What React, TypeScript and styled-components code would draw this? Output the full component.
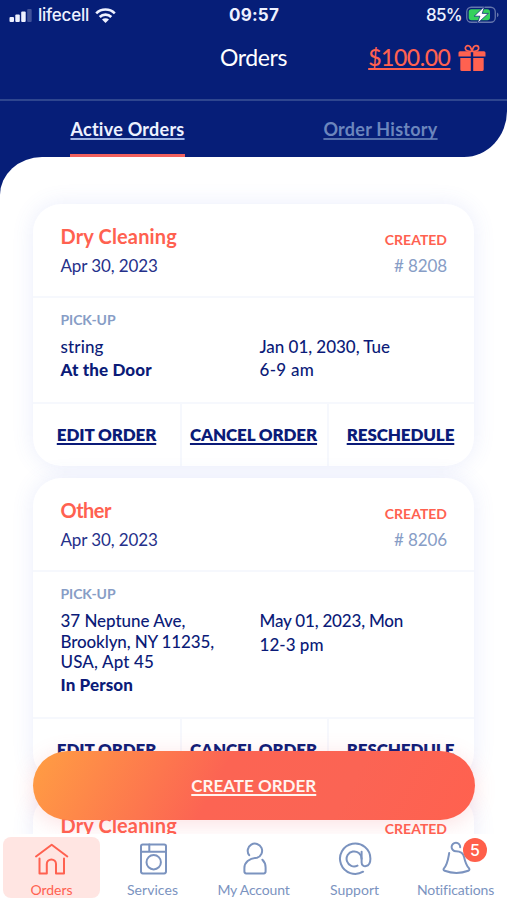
import React from 'react';
import styled, { createGlobalStyle } from 'styled-components';

const navy = '#061e78';
const ink = '#0b1b78';
const coral = '#ff6150';
const muted = '#879dc6';

const GlobalStyle = createGlobalStyle`
  *, *::before, *::after { box-sizing: border-box; }
  body { margin: 0; background: #fff; font-family: Lato, sans-serif; }
  svg { display: block; flex: none; }
`;

const Screen = styled.div`
  position: relative;
  display: flex;
  flex-direction: column;
  width: 507px;
  height: 900px;
  overflow: hidden;
  background: #fff;
`;

const Header = styled.header`
  flex: none;
  height: 157px;
  background: ${navy};
  border-bottom-right-radius: 43px 46px;
  color: #fff;
`;

const StatusBar = styled.div`
  display: grid;
  grid-template-columns: 1fr auto 1fr;
  align-items: center;
  height: 30px;
  padding: 0 8px 0 9px;
  font-family: Inter, sans-serif;
  font-size: 17px;
  line-height: 30px;
  color: #eef1ff;
`;

const StatusSide = styled.div<{ $end?: boolean }>`
  display: flex;
  align-items: center;
  gap: ${(p) => (p.$end ? 4 : 6)}px;
  justify-content: ${(p) => (p.$end ? 'flex-end' : 'flex-start')};
  font-weight: 500;
  letter-spacing: ${(p) => (p.$end ? -0.7 : -0.24)}px;
`;

const Clock = styled.div`
  font-weight: 700;
  letter-spacing: 0.2px;
`;

const TitleBar = styled.div`
  display: grid;
  grid-template-columns: 1fr auto 1fr;
  align-items: center;
  height: 71px;
  padding: 0 21px 14px;
  border-bottom: 2px solid #2e468f;
`;

const Title = styled.h1`
  grid-column: 2;
  margin: 0 0 1px;
  font-size: 23px;
  line-height: 28px;
  font-weight: 400;
  letter-spacing: -0.4px;
`;

const Balance = styled.div`
  display: flex;
  align-items: center;
  justify-content: flex-end;
  gap: 7.5px;
  color: ${coral};
  font-size: 23px;
  line-height: 28px;
  font-weight: 500;
`;

const Amount = styled.span`
  margin-bottom: 1px;
  letter-spacing: -0.45px;
  text-decoration: underline;
  text-decoration-thickness: 2px;
  text-underline-offset: 2px;
  text-decoration-skip-ink: none;
`;

const Tabs = styled.div`
  display: grid;
  grid-template-columns: 1fr 1fr;
  justify-items: center;
  height: 56px;
  padding-left: 1px;
`;

const Tab = styled.div<{ $active?: boolean }>`
  height: 56px;
  padding-top: 16px;
  font-size: 18px;
  line-height: 24px;
  font-weight: 700;
  letter-spacing: 0.26px;
  color: ${(p) => (p.$active ? '#eef2ff' : '#6c86bd')};
  border-bottom: 3px solid ${(p) => (p.$active ? '#f0605d' : 'transparent')};
  text-decoration: underline;
  text-decoration-color: ${(p) => (p.$active ? '#9fb4e4' : '#5570ad')};
  text-decoration-thickness: 2px;
  text-underline-offset: 2px;
  text-decoration-skip-ink: none;
`;

const Body = styled.main`
  flex: 1;
  min-height: 0;
  overflow: hidden;
  background: linear-gradient(${navy}, ${navy}) 0 0 / 44px 38px no-repeat;
`;

const Sheet = styled.div`
  display: flex;
  flex-direction: column;
  gap: 12px;
  min-height: 100%;
  padding: 47px 33px 0;
  background: #fff;
  border-top-left-radius: 42px 38px;
`;

const Card = styled.article`
  flex: none;
  border-radius: 28px;
  background: #fff;
  box-shadow: 0 0 22px rgba(85, 105, 225, 0.12);
`;

const CardHead = styled.div`
  display: grid;
  grid-template-columns: 1fr auto;
  grid-template-rows: 30px 28px;
  height: 94px;
  padding: 18px 27px 0 27.5px;
  border-bottom: 2px solid #f6f8fd;
`;

const Service = styled.div<{ $tight?: boolean }>`
  font-size: 20px;
  line-height: 28px;
  font-weight: 700;
  letter-spacing: ${(p) => (p.$tight ? -0.5 : 0.15)}px;
  color: ${coral};
`;

const Status = styled.div`
  padding-top: 7px;
  font-size: 14px;
  line-height: 22px;
  font-weight: 700;
  color: ${coral};
`;

const Created = styled.div`
  font-size: 17px;
  line-height: 28px;
  letter-spacing: -0.12px;
  color: #25308a;
`;

const OrderNumber = styled.div`
  font-size: 17px;
  line-height: 28px;
  text-align: right;
  letter-spacing: -0.1px;
  color: ${muted};
`;

const CardBody = styled.div`
  display: grid;
  grid-template-columns: 199px 1fr;
  padding: 12px 0 22px 27.5px;
  color: ${ink};
  font-size: 17px;
  line-height: 20.2px;
  font-weight: 500;
`;

const Leg = styled.div`
  grid-column: 1 / -1;
  margin-bottom: 7px;
  font-size: 14px;
  line-height: 20px;
  font-weight: 700;
  letter-spacing: -0.09px;
  color: ${muted};
`;

const Line = styled.div<{ $track?: number; $bold?: boolean; $gap?: boolean }>`
  margin-top: ${(p) => (p.$gap ? 3 : 0)}px;
  font-weight: ${(p) => (p.$bold ? 900 : 500)};
  letter-spacing: ${(p) => p.$track ?? 0}px;
  white-space: nowrap;
`;

const Actions = styled.div`
  display: grid;
  grid-template-columns: repeat(3, 1fr);
  height: 64px;
  border-top: 2px solid #f6f8fd;
`;

const Action = styled.div`
  display: flex;
  align-items: center;
  justify-content: center;
  padding-bottom: 2px;
  color: ${ink};
  font-size: 17px;
  font-weight: 800;
  letter-spacing: -0.12px;
  text-decoration: underline;
  text-decoration-thickness: 2px;
  text-underline-offset: 2px;
  & + & { border-left: 2px solid #f6f8fd; padding-right: 2px; }
`;

const CreateButton = styled.button`
  position: absolute;
  left: 33px;
  top: 751px;
  width: 441.5px;
  height: 69px;
  border: 0;
  border-radius: 35px;
  background: linear-gradient(118deg, #ff9a44 3%, #fc6453 42%, #fb6454 70%, #ff614f 100%);
  box-shadow: 0 4px 22px rgba(240, 100, 110, 0.2);
  color: #fff4f0;
  font: 700 17px/24px Lato, sans-serif;
  text-decoration: underline;
  text-decoration-thickness: 2px;
  text-underline-offset: 2px;
`;

const NavBar = styled.nav`
  position: relative;
  flex: none;
  display: grid;
  grid-template-columns: repeat(5, 97px);
  gap: 4px;
  height: 66px;
  padding: 3px 0 0 3px;
  background: #fff;
`;

const NavItem = styled.div<{ $active?: boolean; $track?: number }>`
  position: relative;
  display: flex;
  flex-direction: column;
  align-items: center;
  gap: 5px;
  height: 61px;
  padding-top: 3px;
  border-radius: 8px;
  background: ${(p) => (p.$active ? '#ffe5e2' : 'transparent')};
  color: ${(p) => (p.$active ? coral : '#7b93bf')};
  font-size: 14px;
  line-height: 18px;
  letter-spacing: ${(p) => p.$track ?? 0}px;
  white-space: nowrap;
`;

const Badge = styled.span`
  position: absolute;
  left: 56px;
  top: 1px;
  width: 24px;
  height: 24px;
  border-radius: 50%;
  background: #ff5f4a;
  color: #fff;
  font: 500 16px/24px Inter, sans-serif;
  text-align: center;
`;

const SignalIcon = () => (
  <svg width="23" height="13" viewBox="0 0 23 13" fill="#eef1ff">
    <rect x="0.5" y="8" width="4.5" height="5" rx="1" />
    <rect x="6.3" y="5.5" width="4.5" height="7.5" rx="1" />
    <rect x="12.2" y="2.5" width="4.5" height="10.5" rx="1" />
    <rect x="18.2" y="0" width="4.5" height="13" rx="1" opacity=".25" />
  </svg>
);

const WifiIcon = () => (
  <svg width="21" height="15" viewBox="0 0 21 15" fill="none" stroke="#eef1ff" strokeWidth="2.6">
    <path d="M1.2 5.3a13.2 13.2 0 0 1 18.6 0" />
    <path d="M4.7 9a8.2 8.2 0 0 1 11.6 0" />
    <path d="M10.5 15 7 11.6a5 5 0 0 1 7 0Z" fill="#eef1ff" stroke="none" />
  </svg>
);

const BatteryIcon = () => (
  <svg width="33" height="18" viewBox="0 0 33 18">
    <rect x="0.75" y="1.25" width="28.5" height="15" rx="4.5" fill="none" stroke="#6475ac" strokeWidth="1.3" />
    <rect x="2.7" y="3.2" width="21.3" height="11.1" rx="2.7" fill="#35d15c" />
    <path d="M31 6.5v4.600c1-.5 1.500-1.200 1.500-2.300S32 7 31 6.500Z" fill="#6475ac" />
    <path d="M18.600 0.300 8.200 10.200h5.700L11.300 17.400 22.400 7.400h-6.200Z" fill="#fff" stroke={navy} strokeWidth="0.7" />
  </svg>
);

const GiftIcon = () => (
  <svg width="28" height="28" viewBox="0 0 28 28" fill={coral}>
    <path d="M14 7.500C10.500 7.500 7.300 6.600 7.300 4.300 7.300 2.600 8.600 1.700 9.900 1.700 12.200 1.700 13.400 4.700 14 7.500 14.600 4.700 15.800 1.700 18.100 1.700c1.300 0 2.600.9 2.600 2.600 0 2.300-3.200 3.200-6.700 3.200Z" fill="none" stroke={coral} strokeWidth="1.7" />
    <path d="M2 7.200h10.800v5.300H.5V8.700A1.500 1.500 0 0 1 2 7.200ZM15.200 7.200H26a1.500 1.500 0 0 1 1.500 1.500v3.800H15.200Z" />
    <path d="M2.300 14h10.500v13H3.800a1.500 1.500 0 0 1-1.500-1.500ZM15.200 14h10.500v11.500a1.500 1.500 0 0 1-1.500 1.500h-9Z" />
  </svg>
);

const stroke = {
  fill: 'none',
  stroke: 'currentColor',
  strokeWidth: 2,
  strokeLinecap: 'round' as const,
  strokeLinejoin: 'round' as const,
};

const HomeIcon = () => (
  <svg width="36" height="36" viewBox="0 0 36 36" {...stroke}>
    <path d="M2 16.500 17.700 4.700l15.600 11.800" />
    <path d="M5.500 18.500v15h7.300V24a4.600 4.600 0 0 1 9.200 0v9.500h8V18.500" />
  </svg>
);

const WasherIcon = () => (
  <svg width="36" height="36" viewBox="0 0 36 36" {...stroke}>
    <rect x="6" y="4.5" width="25" height="28.9" rx="1.8" />
    <path d="M6 11.700h25M14.300 4.500v7.200" />
    <circle cx="18.7" cy="22.2" r="7.2" />
  </svg>
);

const UserIcon = () => (
  <svg width="36" height="36" viewBox="0 0 36 36" {...stroke}>
    <path d="M13.200 15.200A7.200 7.200 0 1 1 21 17.700C12.800 18.200 8.400 22.500 8.400 28v3.600c0 1.100.7 1.800 1.800 1.800h17.600c1.100 0 1.800-.7 1.800-1.800V27.500c0-3.200-1-5.700-3.200-7.800" />
  </svg>
);

const AtIcon = () => (
  <svg width="36" height="36" viewBox="0 0 36 36" {...stroke}>
    <path d="M20.500 25.600A7.500 7.500 0 1 1 24.600 18.700V22.500c0 5.300 8.800 5.500 8.800-3.800a15.200 15.200 0 1 0-7.300 13" />
    <path d="M24.600 18.700V11.800" />
  </svg>
);

const BellIcon = () => (
  <svg width="36" height="36" viewBox="0 0 36 36" {...stroke}>
    <path d="M22.200 7.200A4.300 4.300 0 1 0 18 11.300c4.800 0 7.300 1.900 8.100 5.800.9 4.200 1.900 7.900 4.800 11.100.9 1.100.5 2.200-.6 2.600-7.600 2.700-16.200 2.700-23.600 0-1.300-.5-1.500-1.600-.6-2.600 3.600-4.300 4-9.200 5.100-15.200" />
  </svg>
);

type TextLine = { text: string; track?: number };
type Order = {
  service: string;
  tight?: boolean;
  number: string;
  address: TextLine[];
  handover: string;
  day: TextLine;
  slot: TextLine;
};

const orders: Order[] = [
  {
    service: 'Dry Cleaning',
    number: '# 8208',
    address: [{ text: 'string', track: 0.12 }],
    handover: 'At the Door',
    day: { text: 'Jan 01, 2030, Tue', track: -0.03 },
    slot: { text: '6-9 am', track: 0.27 },
  },
  {
    service: 'Other',
    tight: true,
    number: '# 8206',
    address: [
      { text: '37 Neptune Ave,', track: -0.04 },
      { text: 'Brooklyn, NY 11235,', track: -0.13 },
      { text: 'USA, Apt 45', track: 0.14 },
    ],
    handover: 'In Person',
    day: { text: 'May 01, 2023, Mon', track: -0.19 },
    slot: { text: '12-3 pm', track: 0.03 },
  },
  {
    service: 'Dry Cleaning',
    number: '# 8205',
    address: [{ text: 'string', track: 0.12 }],
    handover: 'At the Door',
    day: { text: 'May 01, 2023, Mon', track: -0.19 },
    slot: { text: '12-3 pm', track: 0.03 },
  },
];

const OrderCard = ({ order }: { order: Order }) => (
  <Card>
    <CardHead>
      <Service $tight={order.tight}>{order.service}</Service>
      <Status>CREATED</Status>
      <Created>Apr 30, 2023</Created>
      <OrderNumber>{order.number}</OrderNumber>
    </CardHead>
    <CardBody>
      <Leg>PICK-UP</Leg>
      <div>
        {order.address.map((line) => (
          <Line key={line.text} $track={line.track}>{line.text}</Line>
        ))}
        <Line $bold $gap $track={0.12}>{order.handover}</Line>
      </div>
      <div>
        <Line $track={order.day.track}>{order.day.text}</Line>
        <Line $gap $track={order.slot.track}>{order.slot.text}</Line>
      </div>
    </CardBody>
    <Actions>
      <Action>EDIT ORDER</Action>
      <Action>CANCEL ORDER</Action>
      <Action>RESCHEDULE</Action>
    </Actions>
  </Card>
);

export default function App() {
  return (
    <>
      <GlobalStyle />
      <Screen>
        <Header>
          <StatusBar>
            <StatusSide><SignalIcon />lifecell<WifiIcon /></StatusSide>
            <Clock>09:57</Clock>
            <StatusSide $end>85%<BatteryIcon /></StatusSide>
          </StatusBar>
          <TitleBar>
            <Title>Orders</Title>
            <Balance><Amount>$100.00</Amount><GiftIcon /></Balance>
          </TitleBar>
          <Tabs>
            <Tab $active>Active Orders</Tab>
            <Tab>Order History</Tab>
          </Tabs>
        </Header>
        <Body>
          <Sheet>
            {orders.map((order) => <OrderCard key={order.number} order={order} />)}
          </Sheet>
        </Body>
        <CreateButton>CREATE ORDER</CreateButton>
        <NavBar>
          <NavItem $active><HomeIcon />Orders</NavItem>
          <NavItem $track={0.05}><WasherIcon />Services</NavItem>
          <NavItem $track={-0.15}><UserIcon />My Account</NavItem>
          <NavItem><AtIcon />Support</NavItem>
          <NavItem $track={-0.11}><BellIcon />Notifications<Badge>5</Badge></NavItem>
        </NavBar>
      </Screen>
    </>
  );
}
